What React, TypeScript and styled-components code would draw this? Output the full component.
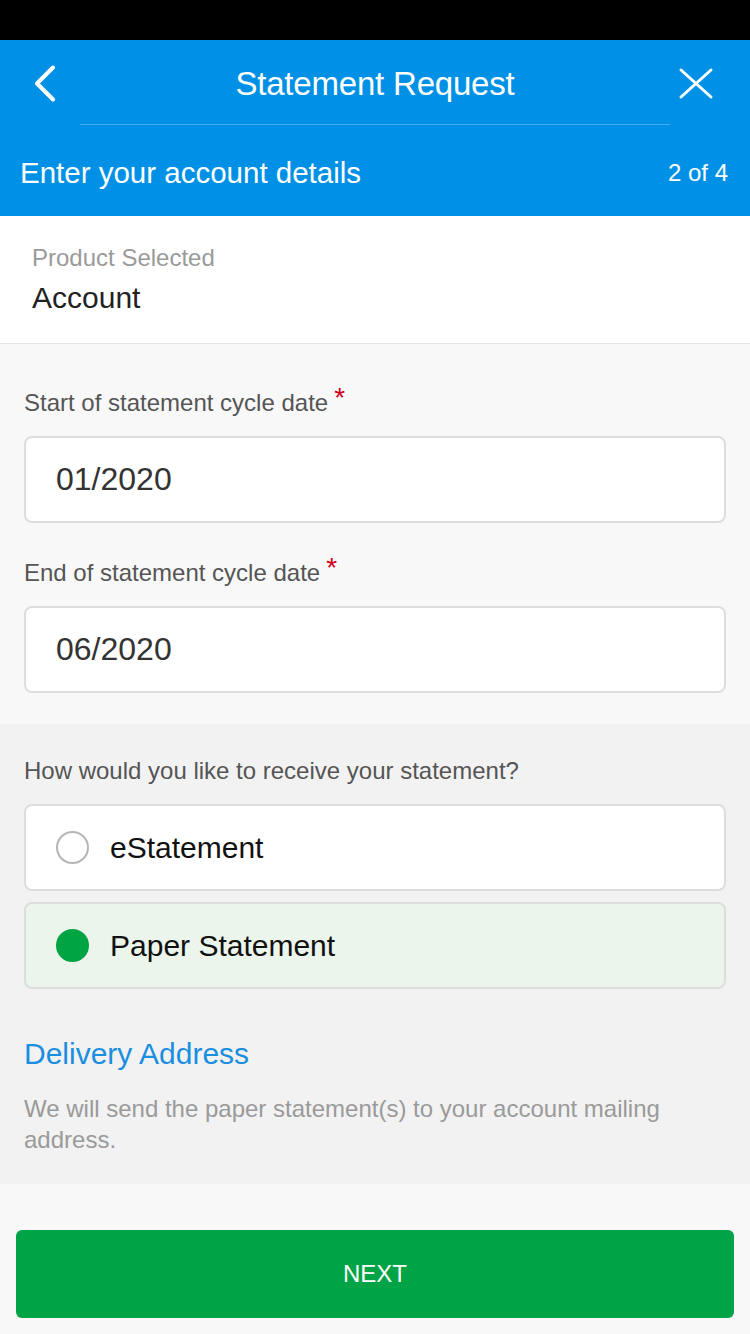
import React, {FC, useState} from 'react';
import styled, {createGlobalStyle} from "styled-components";

const GlobalStyle = createGlobalStyle`
  html, body {
    margin: 0;
    padding: 0;
    background: #f8f8f8;
  }
  * {
    box-sizing: border-box;
  }
  body {
    font-family: "Liberation Sans", Arial, sans-serif;
  }
`;

const Page = styled.div`
  width: 750px;
  min-height: 1334px;
  display: flex;
  flex-direction: column;
  background: #f8f8f8;
`

const StatusBar = styled.div`
  height: 40px;
  background: #000000;
`

const Header = styled.header`
  background: #0091e6;
  color: #ffffff;
`

const NavRow = styled.div`
  height: 84px;
  padding-top: 3px;
  display: grid;
  grid-template-columns: 1fr auto 1fr;
  align-items: center;
`

const NavButton = styled.button<{ $side: 'left' | 'right' }>`
  border: none;
  background: none;
  padding: 0;
  display: flex;
  align-items: center;
  cursor: pointer;
  justify-self: ${p => p.$side === 'left' ? 'start' : 'end'};
  margin: ${p => p.$side === 'left' ? '0 0 0 34px' : '0 36px 0 0'};
`

const Title = styled.h1`
  margin: 0;
  text-align: center;
  font-size: 33px;
  font-weight: 400;
  letter-spacing: -0.2px;
`

const Divider = styled.div`
  height: 1px;
  margin: 0 80px;
  background: #42acef;
`

const StepRow = styled.div`
  height: 91px;
  padding: 4px 22px 0 20px;
  display: flex;
  align-items: center;
  justify-content: space-between;
`

const StepTitle = styled.div`
  font-size: 29.5px;
`

const StepCount = styled.div`
  font-size: 24px;
`

const ProductBox = styled.section`
  background: #ffffff;
  padding: 27px 32px 27px;
  border-bottom: 1px solid #e6e6e6;
`

const Caption = styled.div`
  font-size: 24px;
  line-height: 30px;
  color: #9a9a9a;
`

const ProductName = styled.div`
  margin-top: 7px;
  font-size: 30px;
  line-height: 36px;
  color: #222222;
`

const Section = styled.section<{ $tone: string }>`
  background: ${p => p.$tone};
  padding: ${p => p.$tone === '#f8f8f8' ? '42px 24px 31px' : '31px 24px 29px'};
  display: flex;
  flex-direction: column;
`

const FieldLabel = styled.label<{ $spaced?: boolean }>`
  display: block;
  font-size: 24px;
  line-height: 32px;
  color: #555555;
  margin-top: ${p => p.$spaced ? '33px' : '0'};
  margin-bottom: 17px;
`

const Required = styled.span`
  color: #d0021b;
  font-size: 28px;
  margin-left: 6px;
  position: relative;
  top: -4px;
`

const DateInput = styled.input`
  width: 100%;
  height: 87px;
  border: 2px solid #dddddd;
  border-radius: 8px;
  background: #ffffff;
  padding: 0 30px;
  font-family: "Liberation Sans", Arial, sans-serif;
  font-size: 32px;
  color: #333333;
  outline: none;
`

const Options = styled.div`
  display: flex;
  flex-direction: column;
  gap: 11px;
`

const Option = styled.label<{ $checked: boolean }>`
  height: 87px;
  display: flex;
  align-items: center;
  gap: 21px;
  padding: 0 30px;
  border: 2px solid #dddddd;
  border-radius: 8px;
  background: ${p => p.$checked ? '#ebf5ec' : '#ffffff'};
  font-size: 30px;
  color: #111111;
  cursor: pointer;
`

const Radio = styled.span<{ $checked: boolean }>`
  width: 33px;
  height: 33px;
  border-radius: 50%;
  flex: none;
  border: 2px solid ${p => p.$checked ? '#00a443' : '#b5b5b5'};
  background: ${p => p.$checked ? '#00a443' : '#ffffff'};
`

const LinkTitle = styled.div`
  margin-top: 47px;
  font-size: 30px;
  line-height: 36px;
  color: #1a8fe0;
`

const Note = styled.p`
  margin: 21px 0 0;
  font-size: 24px;
  line-height: 31px;
  color: #9a9a9a;
`

const Footer = styled.footer`
  flex: 1;
  padding: 46px 16px 16px;
  background: #f8f8f8;
`

const NextButton = styled.button`
  width: 100%;
  height: 88px;
  border: none;
  border-radius: 6px;
  background: #00a346;
  color: #ffffff;
  font-family: "Liberation Sans", Arial, sans-serif;
  font-size: 24px;
  cursor: pointer;
`

const App: FC = () => {
    const [method, setMethod] = useState('paper');
    const [start, setStart] = useState('01/2020');
    const [end, setEnd] = useState('06/2020');

    const options = [
        {id: 'e', label: 'eStatement'},
        {id: 'paper', label: 'Paper Statement'},
    ];

    return <>
        <GlobalStyle/>
        <Page>
            <StatusBar/>
            <Header>
                <NavRow>
                    <NavButton $side="left" aria-label="back">
                        <svg width="22" height="37" viewBox="0 0 22 37">
                            <path d="M19 2.5 L3 18.5 L19 34.5" stroke="#fff" strokeWidth="4" fill="none"
                                  strokeLinecap="round" strokeLinejoin="round"/>
                        </svg>
                    </NavButton>
                    <Title>Statement Request</Title>
                    <NavButton $side="right" aria-label="close">
                        <svg width="36" height="33" viewBox="0 0 36 33">
                            <path d="M3 3 L33 30 M33 3 L3 30" stroke="#fff" strokeWidth="3" fill="none"
                                  strokeLinecap="round"/>
                        </svg>
                    </NavButton>
                </NavRow>
                <Divider/>
                <StepRow>
                    <StepTitle>Enter your account details</StepTitle>
                    <StepCount>2 of 4</StepCount>
                </StepRow>
            </Header>

            <ProductBox>
                <Caption>Product Selected</Caption>
                <ProductName>Account</ProductName>
            </ProductBox>

            <Section $tone="#f8f8f8">
                <FieldLabel htmlFor="start">Start of statement cycle date<Required>*</Required></FieldLabel>
                <DateInput id="start" value={start} onChange={e => setStart(e.target.value)}/>
                <FieldLabel htmlFor="end" $spaced>End of statement cycle date<Required>*</Required></FieldLabel>
                <DateInput id="end" value={end} onChange={e => setEnd(e.target.value)}/>
            </Section>

            <Section $tone="#f2f2f2">
                <FieldLabel>How would you like to receive your statement?</FieldLabel>
                <Options>
                    {options.map(o =>
                        <Option key={o.id} $checked={method === o.id} onClick={() => setMethod(o.id)}>
                            <Radio $checked={method === o.id}/>
                            {o.label}
                        </Option>
                    )}
                </Options>
                <LinkTitle>Delivery Address</LinkTitle>
                <Note>We will send the paper statement(s) to your account mailing address.</Note>
            </Section>

            <Footer>
                <NextButton>NEXT</NextButton>
            </Footer>
        </Page>
    </>;
};

export default App;
